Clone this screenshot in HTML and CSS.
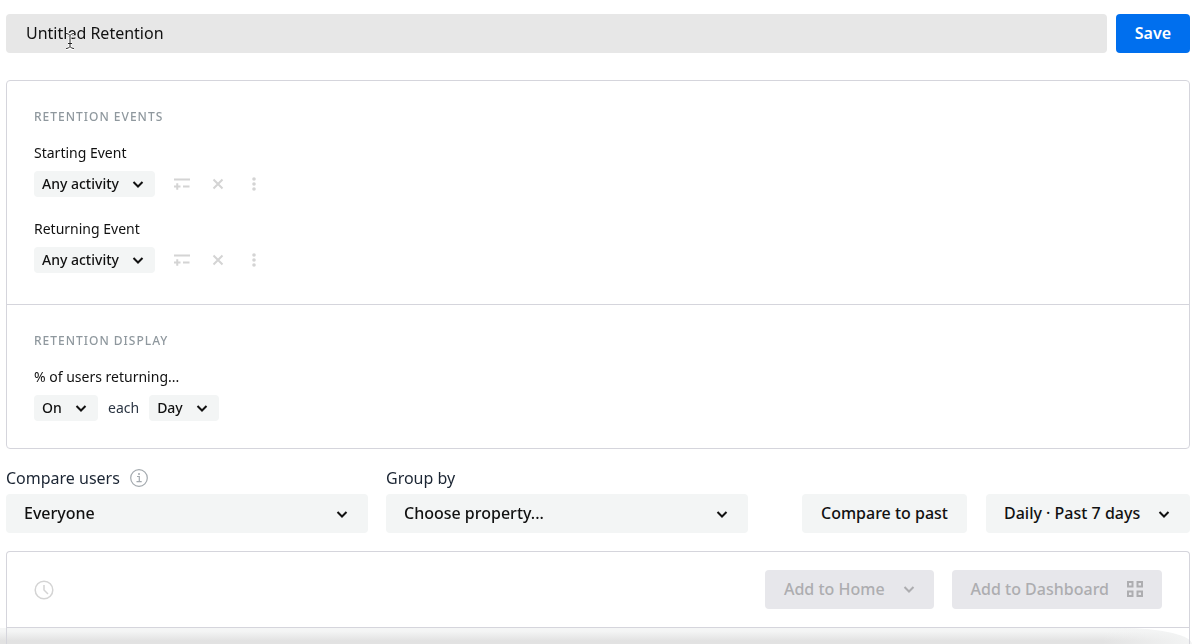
FILE: index.html
```
<!DOCTYPE html>
<html lang="en">
<head>
  <meta charset="UTF-8">
  <meta name="viewport" content="width=device-width, initial-scale=1">
  <title>Untitled Retention</title>
  <link rel="stylesheet" href="styles.css">
</head>
<body>
  <!-- shared icons -->
  <svg class="sprite" aria-hidden="true">
    <symbol id="chevron" viewBox="0 0 12 12"><path d="M1.500 4l4.500 4.500 4.500-4.500" fill="none" stroke="currentColor" stroke-width="2"/></symbol>
    <symbol id="filter" viewBox="0 0 16 12"><path d="M0 1.500h16M0 8.500h6.500M3.250 5.250v6.500M9 8.500h6.500" fill="none" stroke="currentColor" stroke-width="2"/></symbol>
    <symbol id="cross" viewBox="0 0 12 12"><path d="M1.500 1.500l9 9M10.500 1.500l-9 9" fill="none" stroke="currentColor" stroke-width="2"/></symbol>
    <symbol id="dots" viewBox="0 0 4 14"><g fill="currentColor"><circle cx="2" cy="2" r="1.800"/><circle cx="2" cy="7" r="1.800"/><circle cx="2" cy="12" r="1.800"/></g></symbol>
  </svg>

  <header class="title-bar">
    <input class="title-input" type="text" value="Untitled Retention" aria-label="Report name">
    <button class="btn btn-save" type="button">Save</button>
    <svg class="cursor" viewBox="0 0 10 18" aria-hidden="true"><path d="M1 1.500q3 0 4 2 1-2 4-2M5 3.500v11M1 16.500q3 0 4-2 1 2 4 2M3 11.500h4" fill="none" stroke="#fff" stroke-width="3"/><path d="M1 1.500q3 0 4 2 1-2 4-2M5 3.500v11M1 16.500q3 0 4-2 1 2 4 2M3 11.500h4" fill="none" stroke="#222" stroke-width="1"/></svg>
  </header>

  <main>
    <div class="panel">
      <section class="section section-events">
        <h2 class="section-title">Retention Events</h2>
        <div class="event">
          <label class="event-label" for="startEvent">Starting Event</label>
          <div class="event-row">
            <div class="select select-small">
              <select id="startEvent"><option>Any activity</option></select>
              <svg class="chevron"><use href="#chevron"/></svg>
            </div>
            <div class="actions">
              <button type="button" aria-label="Filter"><svg class="icon-filter"><use href="#filter"/></svg></button>
              <button type="button" aria-label="Remove"><svg class="icon-cross"><use href="#cross"/></svg></button>
              <button type="button" aria-label="More"><svg class="icon-dots"><use href="#dots"/></svg></button>
            </div>
          </div>
        </div>
        <div class="event">
          <label class="event-label" for="returnEvent">Returning Event</label>
          <div class="event-row">
            <div class="select select-small">
              <select id="returnEvent"><option>Any activity</option></select>
              <svg class="chevron"><use href="#chevron"/></svg>
            </div>
            <div class="actions">
              <button type="button" aria-label="Filter"><svg class="icon-filter"><use href="#filter"/></svg></button>
              <button type="button" aria-label="Remove"><svg class="icon-cross"><use href="#cross"/></svg></button>
              <button type="button" aria-label="More"><svg class="icon-dots"><use href="#dots"/></svg></button>
            </div>
          </div>
        </div>
      </section>

      <section class="section">
        <h2 class="section-title">Retention Display</h2>
        <label class="event-label" for="returnMode">% of users returning...</label>
        <div class="event-row">
          <div class="select select-small">
            <select id="returnMode"><option>On</option></select>
            <svg class="chevron"><use href="#chevron"/></svg>
          </div>
          <label class="each" for="returnUnit">each</label>
          <div class="select select-small">
            <select id="returnUnit"><option>Day</option></select>
            <svg class="chevron"><use href="#chevron"/></svg>
          </div>
        </div>
      </section>
    </div>

    <div class="controls">
      <div class="field">
        <div class="field-head">
          <label for="compareUsers">Compare users</label>
          <svg class="icon-info" viewBox="0 0 18 18" aria-hidden="true"><g fill="none" stroke="currentColor" stroke-width="1.200"><circle cx="9" cy="9" r="8.300"/><path d="M7 7.500h2.300v5M6.500 12.700h5.200"/></g><circle cx="9" cy="5" r="1" fill="currentColor"/></svg>
        </div>
        <div class="select">
          <select id="compareUsers"><option>Everyone</option></select>
          <svg class="chevron"><use href="#chevron"/></svg>
        </div>
      </div>
      <div class="field">
        <div class="field-head">
          <label for="groupBy">Group by</label>
        </div>
        <div class="select">
          <select id="groupBy"><option>Choose property...</option></select>
          <svg class="chevron"><use href="#chevron"/></svg>
        </div>
      </div>
      <div class="range">
        <button class="btn" type="button">Compare to past</button>
        <div class="select">
          <select class="range-select" aria-label="Date range"><option>Daily · Past 7 days</option></select>
          <svg class="chevron"><use href="#chevron"/></svg>
        </div>
      </div>
    </div>

    <div class="panel results">
      <div class="results-head">
        <svg class="icon-clock" viewBox="0 0 20 20" aria-hidden="true"><g fill="none" stroke="currentColor" stroke-width="1.500"><circle cx="10" cy="10" r="8.800"/><path d="M10 5v5l4 4"/></g></svg>
        <div class="results-actions">
          <button class="btn btn-disabled" type="button" disabled>Add to Home
            <svg class="icon-small"><use href="#chevron"/></svg>
          </button>
          <button class="btn btn-disabled" type="button" disabled>Add to Dashboard
            <svg class="icon-grid" viewBox="0 0 16 16" aria-hidden="true"><g fill="none" stroke="currentColor" stroke-width="2"><rect x="1" y="1" width="4.500" height="4.500"/><rect x="10.500" y="1" width="4.500" height="4.500"/><rect x="1" y="10.500" width="4.500" height="4.500"/><rect x="10.500" y="10.500" width="4.500" height="4.500"/></g></svg>
          </button>
        </div>
      </div>
    </div>
  </main>
  <div class="bottom-shadow"></div>
</body>
</html>
```

FILE: styles.css
```
* {
  box-sizing: border-box;
}
body {
  font-family: "Noto Sans", "Open Sans", sans-serif;
  font-size: 16px;
  line-height: 20px;
  color: #111;
  background: #fff;
  margin: 0;
  padding: 14px 10px 0 6px;
  height: 100vh;
  overflow: hidden;
  display: flex;
  flex-direction: column;
}
main {
  flex: 1;
  display: flex;
  flex-direction: column;
}
button, input, select {
  font: inherit;
  color: inherit;
  border: none;
  margin: 0;
}
button, select {
  cursor: pointer;
}
.sprite {
  position: absolute;
  width: 0;
  height: 0;
}

/* title */
.title-bar {
  position: relative;
  display: flex;
  gap: 9px;
  margin-bottom: 27px;
}
.title-input {
  flex: 1;
  min-width: 0;
  height: 39px;
  padding: 0 20px 2px;
  background: #e7e7e7;
  border-radius: 4px;
}
.cursor {
  position: absolute;
  left: 59px;
  top: 18px;
  width: 10px;
  height: 18px;
}
.btn {
  display: flex;
  align-items: center;
  gap: 18px;
  height: 39px;
  padding: 0 19px 2px;
  font-weight: 500;
  background: #f3f5f5;
  border-radius: 4px;
  white-space: nowrap;
}
.btn-save {
  background: #006fee;
  color: #fff;
  font-weight: 600;
}
.btn-disabled {
  background: #e7e7eb;
  color: #adadb0;
  cursor: default;
}

/* panels */
.panel {
  border: 1px solid #d5d5dc;
  border-radius: 4px;
}
.section {
  padding: 28px 27px 27px;
}
.section-events {
  padding-bottom: 31px;
  border-bottom: 1px solid #d5d5dc;
}
.section-title {
  margin: 0 0 18px;
  font-size: 12px;
  line-height: 16px;
  font-weight: 500;
  letter-spacing: 1px;
  text-transform: uppercase;
  color: #8f989e;
}
.event + .event {
  margin-top: 22px;
}
.event-label {
  display: block;
  margin-bottom: 8px;
  font-size: 14px;
}
.event-row {
  display: flex;
  align-items: center;
  font-size: 14px;
}
.each {
  padding: 0 10px;
  color: #2c3644;
}
.actions {
  display: flex;
  align-items: center;
  gap: 12px;
  margin-left: 15px;
  color: #d4d4d4;
}
.actions button {
  display: flex;
  align-items: center;
  justify-content: center;
  width: 24px;
  height: 24px;
  padding: 0;
  background: none;
}
.icon-filter {
  width: 16px;
  height: 12px;
}
.icon-cross {
  width: 12px;
  height: 12px;
}
.icon-dots {
  width: 4px;
  height: 14px;
}

/* dropdowns: the chevron shares the grid cell with the select */
.select {
  display: grid;
  align-items: center;
}
.select select {
  grid-area: 1 / 1;
  appearance: none;
  width: 100%;
  height: 39px;
  padding: 0 49px 2px 18px;
  font-weight: 500;
  background: #f3f5f5;
  border-radius: 4px;
}
.chevron {
  grid-area: 1 / 1;
  justify-self: end;
  width: 12px;
  height: 12px;
  margin-right: 20px;
  pointer-events: none;
}
.select-small select {
  height: 26px;
  padding: 0 36px 0 8px;
}
.select-small .chevron {
  margin-right: 11px;
}

/* controls */
.controls {
  display: flex;
  align-items: flex-end;
  gap: 18px;
  margin: 19px 0 18px;
}
.field {
  flex: 1;
}
.field-head {
  display: flex;
  align-items: center;
  gap: 10px;
  margin-bottom: 6px;
  color: #1b2533;
}
.icon-info {
  width: 18px;
  height: 18px;
  color: #a3a9ae;
}
.range {
  display: flex;
  gap: 19px;
  margin-left: 36px;
}

/* results */
.results {
  flex: 1;
  border-bottom: none;
  border-radius: 4px 4px 0 0;
}
.results-head {
  display: flex;
  align-items: center;
  justify-content: space-between;
  padding: 18px 27px;
  border-bottom: 1px solid #d5d5dc;
}
.results-actions {
  display: flex;
  gap: 18px;
}
.icon-clock {
  width: 20px;
  height: 20px;
  color: #d4d4d4;
}
.icon-small {
  width: 12px;
  height: 12px;
}
.icon-grid {
  width: 16px;
  height: 16px;
}
.bottom-shadow {
  position: fixed;
  z-index: -1;
  left: 0;
  right: 8px;
  bottom: 0;
  height: 16px;
  background: linear-gradient(to right, transparent calc(100% - 90px), #f3f4f4), linear-gradient(#f4f5f5 20%, #e2e2e2 80%);
  border-top-right-radius: 70px 16px;
}
@media (max-width: 900px) {
  .controls { flex-wrap: wrap; }
  .range { margin-left: 0; }
}
```
